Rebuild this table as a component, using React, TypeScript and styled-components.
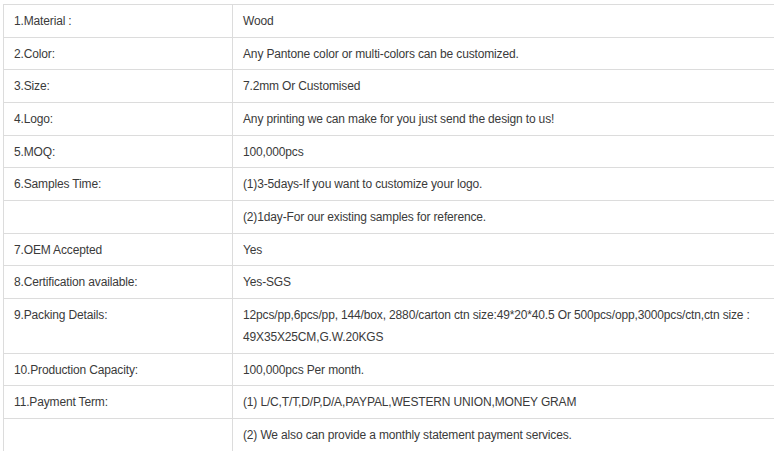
import React from "react";
import styled, { createGlobalStyle } from "styled-components";

const Global = createGlobalStyle`
  html, body { margin: 0; padding: 0; background: #fff; overflow: hidden; }
  body { font-family: Arial, "Liberation Sans", sans-serif; }
`;

const Page = styled.div`
  padding: 4px 0 0 3px;
  width: 800px;
`;

const Table = styled.table`
  border-collapse: collapse;
  width: 782px;
  table-layout: fixed;
  font-family: Arial, "Liberation Sans", sans-serif;
  font-size: 12px;
  color: #3a3a3a;
`;

const Cell = styled.td<{ $label?: boolean }>`
  border: 1px solid #dcdcdc;
  padding: 5px 10px 4.67px 10px;
  line-height: 22px;
  vertical-align: top;
  width: ${(p) => (p.$label ? "208px" : "auto")};
  letter-spacing: -0.15px;
`;

const rows: [string, string][] = [
  ["1.Material :", "Wood"],
  ["2.Color:", "Any Pantone color or multi-colors can be customized."],
  ["3.Size:", "7.2mm Or Customised"],
  ["4.Logo:", "Any printing we can make for you just send the design to us!"],
  ["5.MOQ:", "100,000pcs"],
  ["6.Samples Time:", "(1)3-5days-If you want to customize your logo."],
  ["", "(2)1day-For our existing samples for reference."],
  ["7.OEM Accepted", "Yes"],
  ["8.Certification available:", "Yes-SGS"],
  [
    "9.Packing Details:",
    "12pcs/pp,6pcs/pp, 144/box, 2880/carton ctn size:49*20*40.5 Or 500pcs/opp,3000pcs/ctn,ctn size : 49X35X25CM,G.W.20KGS",
  ],
  ["10.Production Capacity:", "100,000pcs Per month."],
  ["11.Payment Term:", "(1) L/C,T/T,D/P,D/A,PAYPAL,WESTERN UNION,MONEY GRAM"],
  ["", "(2) We also can provide a monthly statement payment services."],
];

export default function App() {
  return (
    <Page>
      <Global />
      <Table>
        <tbody>
          {rows.map(([k, v], i) => (
            <tr key={i}>
              <Cell $label>{k}</Cell>
              <Cell>{v}</Cell>
            </tr>
          ))}
        </tbody>
      </Table>
    </Page>
  );
}
